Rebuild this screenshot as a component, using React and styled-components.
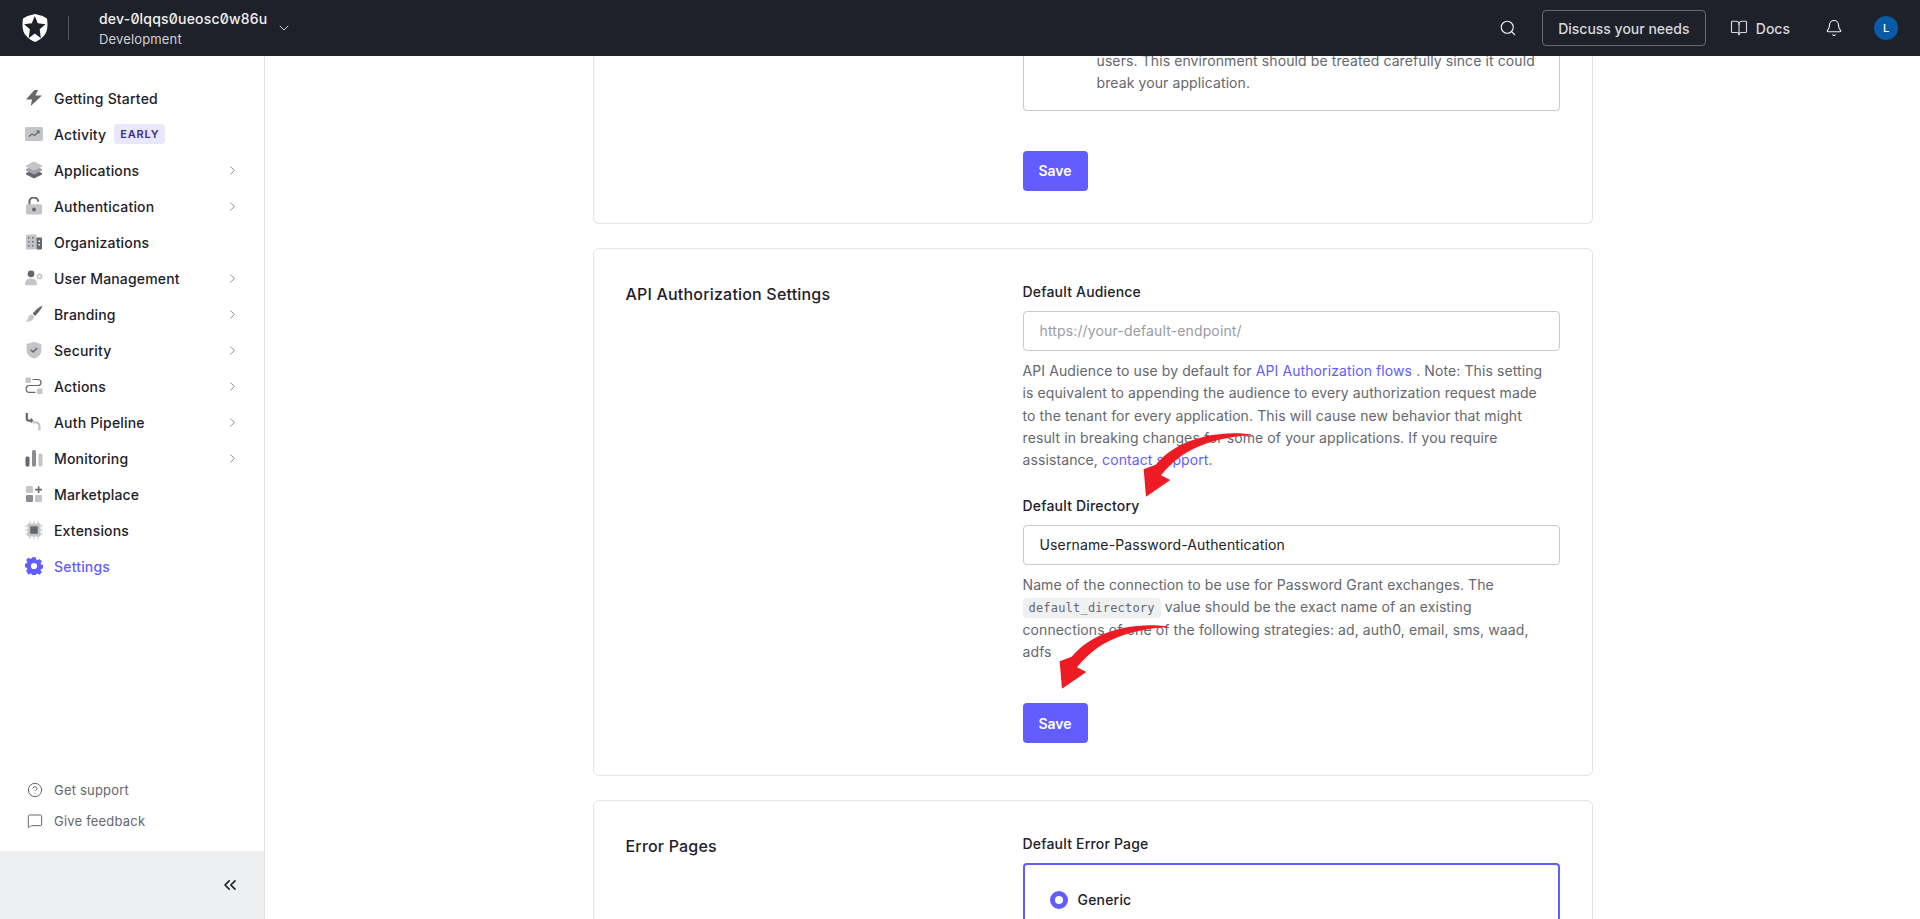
import React from 'react';
import styled, { createGlobalStyle } from 'styled-components';
import { Bell, BookOpen, ChevronDown, ChevronRight, ChevronsLeft, CircleHelp, MessageSquare, Search } from 'lucide-react';

const LIGHT = '#c4c5c8';
const DARK = '#65676e';

const Duo = ({ children }) => (
  <svg width="18" height="18" viewBox="0 0 18 18" fill={LIGHT}>{children}</svg>
);

const icons = {
  bolt: <Duo><path fill={DARK} d="M9.5 1 1 10.5h6L5.8 17 17 6.6h-6.6L13 1z" /></Duo>,
  activity: (
    <Duo>
      <rect x="0" y="2" width="18" height="14" rx="1.5" />
      <path fill="none" stroke={DARK} strokeWidth="1.2" d="M4 11.5l3-2.5 2.5 1.5L14 6.5M11.5 6.2H14v2.4" />
    </Duo>
  ),
  stack: (
    <Duo>
      <path fill={DARK} d="M1 12.200l3-1.600 5 2.400 5-2.400 3 1.600v1.400l-8 3.800-8-3.800z" />
      <path fill="#a2a4a9" d="M1 8.200l3-1.600 5 2.400 5-2.400 3 1.600v1.400l-8 3.800-8-3.800z" />
      <path d="M1 4.400L9 .6l8 3.800v1.400L9 9.600 1 5.800z" />
    </Duo>
  ),
  lock: (
    <Duo>
      <path fill="none" stroke={DARK} strokeWidth="2" d="M4.400 7.500V5.200a4.400 4.400 0 0 1 8.800-.6" />
      <rect x="1" y="7.200" width="16" height="10.300" rx="1.500" />
      <circle cx="9" cy="12.400" r="2" fill={DARK} />
    </Duo>
  ),
  building: (
    <Duo>
      <rect x="1" y="1.500" width="10.500" height="15" rx=".8" />
      <rect x="11.500" y="4.500" width="5.500" height="12" rx=".8" fill={DARK} />
      <path fill={DARK} d="M3 4h1.500v1.500H3zM7 4h1.500v1.500H7zM3 8h1.500v1.500H3zM7 8h1.500v1.500H7zM3 12h1.500v1.500H3zM7 12h1.500v1.500H7z" />
      <path fill="#fff" d="M13.500 7.500H15V9h-1.500zM13.500 11H15v1.500h-1.500z" />
    </Duo>
  ),
  users: (
    <Duo>
      <circle cx="6" cy="4.800" r="3.400" fill={DARK} />
      <path d="M0 15c0-4 2.400-5.600 6-5.600s6 1.600 6 5.600c0 .8-.5 1.200-1.200 1.200H1.200C.5 16.200 0 15.800 0 15z" />
      <circle cx="14.600" cy="7.400" r="2" fill="none" stroke={LIGHT} strokeWidth="1.600" />
    </Duo>
  ),
  brush: (
    <Duo>
      <path fill={DARK} d="M17.500 0.500c-.6 2.600-3.400 6.800-7.400 10.400L7.600 8.400C10.600 5 14.600 1.600 17.500 0.500z" />
      <path d="M6.800 9.200l2.500 2.500c-.6 3-3.600 5-8.300 5.200 1.600-1.300 1.600-3 2.300-4.600.6-1.500 1.800-2.600 3.500-3.100z" />
    </Duo>
  ),
  shield: (
    <Duo>
      <path d="M9 .8l7.400 2.400v6.200c0 3.800-3 6.600-7.400 8-4.400-1.400-7.400-4.200-7.400-8V3.200z" />
      <path fill="none" stroke={DARK} strokeWidth="1.600" d="M5.800 8.800L8.200 11l4-4" />
    </Duo>
  ),
  actions: (
    <Duo>
      <rect x="0.500" y="0.500" width="5.500" height="5.500" rx=".8" />
      <rect x="12" y="11.500" width="5.500" height="5.500" rx=".8" />
      <path fill="none" stroke={DARK} strokeWidth="1.200" d="M7.500 2.500H13a3 3 0 0 1 0 6H4.500a3.400 3.400 0 0 0 0 6.800H10.500" />
    </Duo>
  ),
  pipeline: (
    <Duo>
      <path fill="none" stroke={DARK} strokeWidth="2.200" d="M1.800 0v5.600c0 1.400.8 2 2 2h3" />
      <path fill="none" stroke={LIGHT} strokeWidth="2.200" d="M7.500 9.400h3.400c1.800 0 3.500 1.400 3.500 3.600v4.400" />
      <path fill={DARK} d="M5.800 4.600l2.600 2.900-2.600 2.900z" />
    </Duo>
  ),
  bars: (
    <Duo>
      <rect x="0.500" y="7.500" width="4" height="10" rx="1.500" fill={DARK} />
      <rect x="7" y="1" width="4" height="16.500" rx="1.500" fill="#8b8d93" />
      <rect x="13.500" y="4.500" width="4" height="13" rx="1.500" />
    </Duo>
  ),
  market: (
    <Duo>
      <rect x="1" y="1" width="7" height="7" rx="1.200" />
      <rect x="1" y="10" width="7" height="7" rx="1.200" fill="#8b8d93" />
      <rect x="10" y="10" width="7" height="7" rx="1.200" />
      <path fill={DARK} d="M12.800 1.200h1.600v2.600H17v1.600h-2.600V8h-1.600V5.400h-2.600V3.800h2.600z" />
    </Duo>
  ),
  chip: (
    <Duo>
      <path stroke={LIGHT} strokeWidth="1" d="M5 0v18M9 0v18M13 0v18M0 5h18M0 9h18M0 13h18" />
      <rect x="2.500" y="2.500" width="13" height="13" rx="1.200" />
      <rect x="5.200" y="5.200" width="7.600" height="7.600" rx=".6" fill={DARK} />
    </Duo>
  ),
  gear: (
    <svg width="18" height="18" viewBox="0 0 18 18" fill="#635dff">
      <path fillRule="evenodd" d="M7.300.3h3.400l.5 2.300 1.300.6 2-1.300 2.400 2.400-1.300 2 .6 1.300 2.100.5v3.400l-2.100.5-.6 1.300 1.300 2-2.400 2.400-2-1.300-1.300.6-.5 2.100H7.300l-.5-2.100-1.300-.6-2 1.300L1.100 14l1.300-2-.6-1.300-2.100-.5V6.800l2.100-.5.6-1.300-1.300-2 2.400-2.400 2 1.300 1.300-.6zM9 5.900a3.100 3.100 0 1 0 0 6.200 3.100 3.100 0 0 0 0-6.200z" />
    </svg>
  ),
};

const navItems = [
  { label: 'Getting Started', icon: 'bolt' },
  { label: 'Activity', icon: 'activity', badge: 'EARLY' },
  { label: 'Applications', icon: 'stack', more: true },
  { label: 'Authentication', icon: 'lock', more: true },
  { label: 'Organizations', icon: 'building' },
  { label: 'User Management', icon: 'users', more: true },
  { label: 'Branding', icon: 'brush', more: true },
  { label: 'Security', icon: 'shield', more: true },
  { label: 'Actions', icon: 'actions', more: true },
  { label: 'Auth Pipeline', icon: 'pipeline', more: true },
  { label: 'Monitoring', icon: 'bars', more: true },
  { label: 'Marketplace', icon: 'market' },
  { label: 'Extensions', icon: 'chip' },
  { label: 'Settings', icon: 'gear', active: true },
];

const RedArrow = () => (
  <svg width="114" height="70" viewBox="420 90 340 210" fill="#ed1c24">
    <path d="M752 103C690 94 610 102 548 132C510 150 485 172 466 194L430 208L437 290L510 240L482 226C520 180 560 150 620 130C665 115 710 108 752 106Z" />
  </svg>
);

function App() {
  return (
    <Page>
      <GlobalStyle />
      <Header>
        <Brand>
          <svg width="26" height="28" viewBox="0 0 25 28">
            <path fill="#fff" d="M5 2 12.500 0 20 2l4.500 2.500c1 6.500.7 12.500-2.500 16.500-2.500 3.300-6 5.500-9.500 7C9 26.500 5.500 24.300 3 21-.2 17-.5 11 .5 4.500z" />
            <path fill="#1e212a" d="M12.300 2l3 7.200 7.700 1.100-5.800 5 1.200 9-6.100-4.800-6.100 4.800 1.200-9-5.800-5 7.700-1.100z" />
          </svg>
          <BrandDivider />
          <Tenant>
            <TenantName>dev-0lqqs0ueosc0w86u</TenantName>
            <TenantEnv>Development</TenantEnv>
          </Tenant>
          <ChevronDown size={16} strokeWidth={1.5} color="#d0d1d5" />
        </Brand>
        <HeaderActions>
          <Search size={18} strokeWidth={1.5} color="#eeeff1" />
          <DiscussButton>Discuss your needs</DiscussButton>
          <DocsLink><BookOpen size={18} strokeWidth={1.5} />Docs</DocsLink>
          <Bell size={18} strokeWidth={1.5} color="#eeeff1" />
          <Avatar>L</Avatar>
        </HeaderActions>
      </Header>
      <Body>
        <Sidebar>
          <NavList>
            {navItems.map((item) => (
              <NavRow key={item.label} $active={item.active}>
                <NavIcon>{icons[item.icon]}</NavIcon>
                <span>{item.label}</span>
                {item.badge && <Badge>{item.badge}</Badge>}
                {item.more && <NavChevron><ChevronRight size={15} strokeWidth={1.5} /></NavChevron>}
              </NavRow>
            ))}
          </NavList>
          <SupportList>
            <SupportRow><CircleHelp size={16} strokeWidth={1.5} />Get support</SupportRow>
            <SupportRow><MessageSquare size={16} strokeWidth={1.5} />Give feedback</SupportRow>
          </SupportList>
          <SidebarFooter><ChevronsLeft size={20} strokeWidth={2} /></SidebarFooter>
        </Sidebar>
        <Main>
          <Scrolled>
            <Card $cut>
              <div />
              <Fields>
                <OptionBox>
                  users. This environment should be treated carefully since it could break your application.
                </OptionBox>
                <SaveButton>Save</SaveButton>
              </Fields>
            </Card>
            <Card>
              <CardTitle>API Authorization Settings</CardTitle>
              <Fields>
                <Label>Default Audience</Label>
                <Input placeholder="https://your-default-endpoint/" readOnly />
                <Help>
                  API Audience to use by default for <a>API Authorization flows</a> . Note: This setting is
                  equivalent to appending the audience to every authorization request made to the tenant for
                  every application. This will cause new behavior that might result in breaking changes for
                  some of your applications. If you require assistance, <a>contact support</a>.
                  <ArrowMark $left={117} $top={70}><RedArrow /></ArrowMark>
                </Help>
                <Label $next>Default Directory</Label>
                <Input value="Username-Password-Authentication" readOnly />
                <Help>
                  Name of the connection to be use for Password Grant exchanges. The <Code>default_directory</Code> value
                  should be the exact name of an existing connections of one of the following strategies: ad,
                  auth0, email, sms, waad, adfs
                  <ArrowMark $left={33} $top={48}><RedArrow /></ArrowMark>
                </Help>
                <SaveButton>Save</SaveButton>
              </Fields>
            </Card>
            <Card>
              <CardTitle>Error Pages</CardTitle>
              <Fields>
                <Label>Default Error Page</Label>
                <SelectedOption>
                  <Radio />
                  Generic
                </SelectedOption>
              </Fields>
            </Card>
          </Scrolled>
        </Main>
      </Body>
    </Page>
  );
}

export default App;

// styles

const GlobalStyle = createGlobalStyle`
  * { box-sizing: border-box; }
  html, body { margin: 0; height: 100%; background: #fff; }
  body {
    font-family: Inter, "Noto Sans", sans-serif;
    font-size: 14px;
    color: #1e212a;
  }
`;

const Page = styled.div`
  height: 100vh;
  display: flex;
  flex-direction: column;
  overflow: hidden;
`;

const Header = styled.header`
  flex: 0 0 56px;
  height: 56px;
  background: #1e212a;
  display: flex;
  align-items: center;
  justify-content: space-between;
  padding: 0 22px;
  position: relative;
  z-index: 2;
`;

const Brand = styled.div`
  display: flex;
  align-items: center;
`;

const BrandDivider = styled.div`
  width: 1px;
  height: 24px;
  background: #55575f;
  margin: 0 30px 0 20px;
`;

const Tenant = styled.div`
  display: flex;
  flex-direction: column;
  gap: 1px;
  margin-right: 9px;
`;

const TenantName = styled.span`
  color: #f1f1f3;
  font-size: 14px;
  line-height: 20px;
  font-weight: 500;
  font-feature-settings: 'zero' 1;
  letter-spacing: 0.2px;
`;

const TenantEnv = styled.span`
  color: #d0d1d5;
  font-size: 13px;
  line-height: 18px;
  letter-spacing: 0.15px;
`;

const HeaderActions = styled.div`
  display: flex;
  align-items: center;
`;

const DiscussButton = styled.button`
  width: 164px;
  height: 36px;
  margin: 0 24px 0 25px;
  background: transparent;
  border: 1px solid #6a6c74;
  border-radius: 4px;
  color: #d8d9dc;
  font: 500 14px Inter, sans-serif;
`;

const DocsLink = styled.div`
  display: flex;
  align-items: center;
  gap: 8px;
  color: #d8d9dc;
  font-weight: 500;
  margin-right: 35px;
`;

const Avatar = styled.div`
  width: 24px;
  height: 24px;
  margin: 0 0 0 31px;
  border-radius: 50%;
  background: #0a5aa5;
  color: #fff;
  font-size: 11px;
  font-weight: 500;
  display: flex;
  align-items: center;
  justify-content: center;
`;

const Body = styled.div`
  flex: 1;
  min-height: 0;
  display: flex;
`;

const Sidebar = styled.aside`
  flex: 0 0 265px;
  border-right: 1px solid #e3e4e6;
  display: flex;
  flex-direction: column;
`;

const NavList = styled.nav`
  flex: 1;
  padding: 24px 24px 0 25px;
`;

const NavRow = styled.div`
  height: 36px;
  display: flex;
  align-items: center;
  font-weight: 500;
  letter-spacing: 0.18px;
  color: ${(p) => (p.$active ? '#635dff' : '#1e212a')};
`;

const NavIcon = styled.span`
  width: 29px;
  display: flex;
  align-items: center;
`;

const Badge = styled.span`
  margin-left: 8px;
  padding: 0 6px;
  height: 20px;
  line-height: 20px;
  border-radius: 3px;
  background: #e9e7fb;
  color: #3d2f8f;
  font-size: 11px;
  font-weight: 600;
  letter-spacing: 0.8px;
`;

const NavChevron = styled.span`
  margin-left: auto;
  display: flex;
  color: #85878d;
`;

const SupportList = styled.div`
  padding: 0 0 15px 27px;
`;

const SupportRow = styled.div`
  height: 31px;
  display: flex;
  align-items: center;
  gap: 11px;
  font-size: 13px;
  letter-spacing: 0.2px;
  color: #65676e;
`;

const SidebarFooter = styled.div`
  flex: 0 0 68px;
  background: #eeeff1;
  display: flex;
  align-items: center;
  justify-content: flex-end;
  padding-right: 24px;
  color: #1e212a;
`;

const Main = styled.main`
  flex: 1;
  min-width: 0;
  overflow: hidden;
  background: #fff;
`;

const Scrolled = styled.div`
  width: 1000px;
  margin: -6px auto 0;
  display: flex;
  flex-direction: column;
  gap: 24px;
`;

const Card = styled.section`
  display: grid;
  grid-template-columns: 365px 537px;
  column-gap: 32px;
  padding: ${(p) => (p.$cut ? '0' : '32px')} 32px 32px;
  border: 1px solid #e3e4e6;
  border-top-width: ${(p) => (p.$cut ? '0' : '1px')};
  border-radius: ${(p) => (p.$cut ? '0 0 6px 6px' : '6px')};
`;

const CardTitle = styled.h2`
  margin: 0;
  font-size: 16px;
  line-height: 26px;
  font-weight: 500;
  letter-spacing: 0.19px;
`;

const Fields = styled.div`
  display: flex;
  flex-direction: column;
  align-items: flex-start;
`;

const Label = styled.label`
  line-height: 22px;
  font-weight: 500;
  letter-spacing: 0.19px;
  margin-top: ${(p) => (p.$next ? '23px' : '0')};
`;

const Input = styled.input`
  width: 100%;
  height: 40px;
  margin-top: 8px;
  padding: 0 16px;
  border: 1px solid #c9cace;
  border-radius: 4px;
  outline: none;
  font: 400 14px Inter, sans-serif;
  letter-spacing: 0.14px;
  color: #1e212a;
  &::placeholder { color: #9a9ca3; }
`;

const Help = styled.p`
  position: relative;
  margin: 9px 0 0;
  padding-right: 16px;
  font-size: 14px;
  line-height: 22.4px;
  letter-spacing: 0.1px;
  color: #65676e;
  a { color: #635dff; }
`;

const Code = styled.code`
  display: inline-block;
  padding: 0 6px;
  line-height: 20px;
  border-radius: 4px;
  background: #eff0f2;
  font-family: "DejaVu Sans Mono", "Liberation Mono", monospace;
  font-size: 12px;
  letter-spacing: 0.2px;
  color: #65676e;
`;

const ArrowMark = styled.span`
  position: absolute;
  left: ${(p) => p.$left}px;
  top: ${(p) => p.$top}px;
  width: 114px;
  height: 70px;
  pointer-events: none;
`;

const SaveButton = styled.button`
  width: 65px;
  height: 40px;
  margin-top: 40px;
  border: none;
  border-radius: 4px;
  background: #635dff;
  color: #fff;
  font: 600 14px Inter, sans-serif;
`;

const OptionBox = styled.div`
  width: 100%;
  padding: 0 16px 15px 73px;
  border: 1px solid #c9cace;
  border-top: none;
  border-radius: 0 0 4px 4px;
  line-height: 22.4px;
  letter-spacing: 0.1px;
  color: #65676e;
`;

const SelectedOption = styled.div`
  width: 100%;
  margin-top: 8px;
  padding: 24px 24px 40px 25px;
  border: 2px solid #635dff;
  border-radius: 4px;
  display: flex;
  align-items: center;
  gap: 10px;
  line-height: 22px;
  font-weight: 500;
  letter-spacing: 0.19px;
`;

const Radio = styled.span`
  width: 18px;
  height: 18px;
  border-radius: 50%;
  border: 5px solid #635dff;
  background: #fff;
`;
